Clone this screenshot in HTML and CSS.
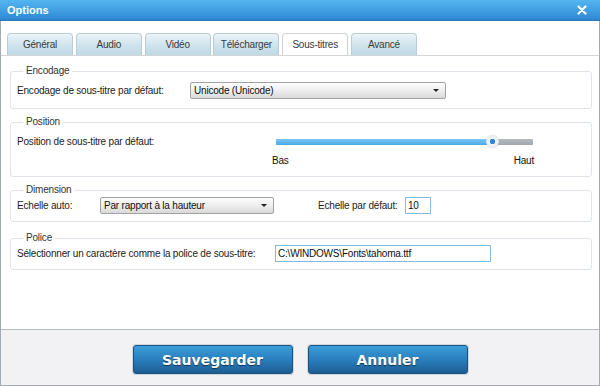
FILE: index.html
```html
<!DOCTYPE html>
<html lang="fr">
<head>
  <meta charset="UTF-8">
  <title>Options</title>
  <link rel="stylesheet" href="styles.css">
</head>
<body>
  <div class="window">
    <!-- Title bar -->
    <div class="titlebar">
      <span class="title">Options</span>
      <svg class="close" width="10" height="10" viewBox="0 0 10 10">
        <path d="M1.5 1.5 L8.5 8.5 M8.5 1.5 L1.5 8.5" stroke="#fff" stroke-width="2.2" stroke-linecap="round"/>
      </svg>
    </div>

    <!-- Tabs -->
    <div class="tabs">
      <div class="tab">Général</div>
      <div class="tab">Audio</div>
      <div class="tab">Vidéo</div>
      <div class="tab">Télécharger</div>
      <div class="tab active">Sous-titres</div>
      <div class="tab">Avancé</div>
    </div>

    <!-- Subtitle settings -->
    <div class="content">
      <fieldset class="group group-encoding">
        <legend>Encodage</legend>
        <div class="row">
          <span class="label label-encoding">Encodage de sous-titre par défaut:</span>
          <div class="select select-encoding">Unicode (Unicode)<span class="arrow"></span></div>
        </div>
      </fieldset>

      <fieldset class="group group-position">
        <legend>Position</legend>
        <div class="row">
          <span class="label label-position">Position de sous-titre par défaut:</span>
          <div class="slider">
            <div class="track-fill" style="width: 84%"></div>
            <div class="thumb" style="left: 84%"></div>
          </div>
        </div>
        <div class="slider-labels">
          <span>Bas</span>
          <span>Haut</span>
        </div>
      </fieldset>

      <fieldset class="group group-dimension">
        <legend>Dimension</legend>
        <div class="row">
          <span class="label label-scale">Echelle auto:</span>
          <div class="select select-scale">Par rapport à la hauteur<span class="arrow"></span></div>
          <span class="label label-default">Echelle par défaut:</span>
          <input class="field field-scale" type="text" value="10">
        </div>
      </fieldset>

      <fieldset class="group group-font">
        <legend>Police</legend>
        <div class="row">
          <span class="label label-font">Sélectionner un caractère comme la police de sous-titre:</span>
          <input class="field field-font" type="text" value="C:\WINDOWS\Fonts\tahoma.ttf">
        </div>
      </fieldset>
    </div>

    <!-- Footer -->
    <div class="footer">
      <button class="btn">Sauvegarder</button>
      <button class="btn">Annuler</button>
    </div>
  </div>
</body>
</html>
```

FILE: styles.css
```css
body {
  margin: 0;
  padding: 0;
  background: #fff;
  font-family: "Liberation Sans", Arial, sans-serif;
  font-size: 10px;
  letter-spacing: -0.2px;
  color: #222;
}
.window {
  width: 600px;
  height: 386px;
  box-sizing: border-box;
  border-left: 1px solid #a3acb5;
  border-right: 1px solid #a3acb5;
  border-bottom: 1px solid #a3acb5;
  display: flex;
  flex-direction: column;
}

/* title bar */
.titlebar {
  height: 21px;
  margin: 0 -1px;
  background: linear-gradient(#55b5f0, #3d9be0 60%, #2e86d2);
  border-bottom: 1px solid #2a78bf;
  box-sizing: border-box;
  display: flex;
  align-items: center;
  justify-content: space-between;
  padding: 0 13px 0 7px;
}
.title {
  color: #fff;
  font-weight: bold;
  font-size: 11px;
  letter-spacing: 0;
}
.close {
  display: block;
}

/* tabs */
.tabs {
  display: flex;
  gap: 2.8px;
  padding: 12px 0 0 6px;
  border-bottom: 1px solid #d3d6d9;
}
.tab {
  width: 66px;
  height: 22px;
  box-sizing: border-box;
  border: 1px solid #b9ccd7;
  border-bottom: none;
  border-radius: 4px 4px 0 0;
  background: linear-gradient(#eaf4f8, #cfe3ec 55%, #bfd9e5);
  color: #3a3a3a;
  display: flex;
  align-items: center;
  justify-content: center;
}
.tab.active {
  background: #fff;
  border-color: #cfd3d6;
}

/* content */
.content {
  flex: 1;
  padding-top: 9px;
}
.group {
  margin: 0 7px 9px 9px;
  border: 1px solid #dfe4ea;
  border-radius: 3px;
  padding: 0 6px;
}
.group legend {
  padding: 0 3px;
  margin-left: 6px;
  line-height: 12px;
  color: #333;
}
.group-encoding {
  padding-top: 5px;
  padding-bottom: 9px;
  margin-bottom: 7px;
}
.group-position {
  padding-top: 5px;
  padding-bottom: 9px;
  margin-bottom: 7px;
}
.group-dimension {
  padding-top: 1px;
  padding-bottom: 7px;
  margin-bottom: 10px;
}
.group-font {
  padding-top: 1px;
  padding-bottom: 7px;
}
.row {
  display: flex;
  align-items: center;
  height: 17px;
}
.label {
  flex: none;
}
.label-encoding { width: 173px; }
.label-position { width: 259px; }
.label-scale { width: 83px; }
.label-default { width: 87px; margin-left: 44px; }
.label-font { width: 258px; }

/* drop-downs */
.select {
  position: relative;
  height: 17px;
  box-sizing: border-box;
  border: 1px solid #a2a2a2;
  border-radius: 2px;
  background: linear-gradient(#fdfdfd, #eeeeee 50%, #d9d9d9);
  color: #111;
  padding-left: 3px;
  line-height: 15px;
}
.select-encoding { width: 256px; }
.select-scale { width: 174px; }
.arrow {
  position: absolute;
  right: 6px;
  top: 6px;
  border-left: 3px solid transparent;
  border-right: 3px solid transparent;
  border-top: 3px solid #222;
}

/* slider */
.slider {
  position: relative;
  width: 257px;
  height: 6px;
  border-radius: 1px;
  background: linear-gradient(#b6bbc0, #a0a6ac);
}
.track-fill {
  height: 100%;
  border-radius: 1px;
  background: linear-gradient(#7cc6f5, #4aa9ea);
}
.thumb {
  position: absolute;
  top: -4px;
  width: 13px;
  height: 13px;
  margin-left: -6px;
  box-sizing: border-box;
  border-radius: 50%;
  background: radial-gradient(circle, #2f86dc 0, #2f86dc 2.5px, #f4f5f6 3px, #dcdfe2);
  box-shadow: 0 0 1px rgba(0,0,0,0.25);
}
.slider-labels {
  display: flex;
  justify-content: space-between;
  width: 262px;
  margin: 5px 0 0 255px;
  line-height: 12px;
  color: #111;
}

/* text fields */
.field {
  height: 17px;
  box-sizing: border-box;
  border: 1px solid #86b9e0;
  padding: 0 2px;
  font-family: "Liberation Sans", Arial, sans-serif;
  font-size: 10px;
  letter-spacing: -0.2px;
  color: #111;
  outline: none;
}
.field-scale { width: 26px; }
.field-font { width: 216px; }

/* footer */
.footer {
  height: 56px;
  box-sizing: border-box;
  border-top: 1px solid #b4bcc4;
  background: #f2f2f4;
  display: flex;
  justify-content: center;
  gap: 15px;
  padding-top: 15px;
}
.btn {
  width: 160px;
  height: 29px;
  border: 1px solid #1b527f;
  border-radius: 3px;
  background: linear-gradient(#3a9cd8, #2a7fbe 50%, #1d5d92);
  box-shadow: 0 0 0 1px #cfd6dd, 0 1px 1px rgba(0,0,0,0.15);
  color: #fff;
  font-family: "DejaVu Sans", Verdana, sans-serif;
  font-weight: bold;
  font-size: 14px;
  letter-spacing: 0;
  text-shadow: 0 1px 1px rgba(0,0,0,0.55);
  cursor: pointer;
}
```
